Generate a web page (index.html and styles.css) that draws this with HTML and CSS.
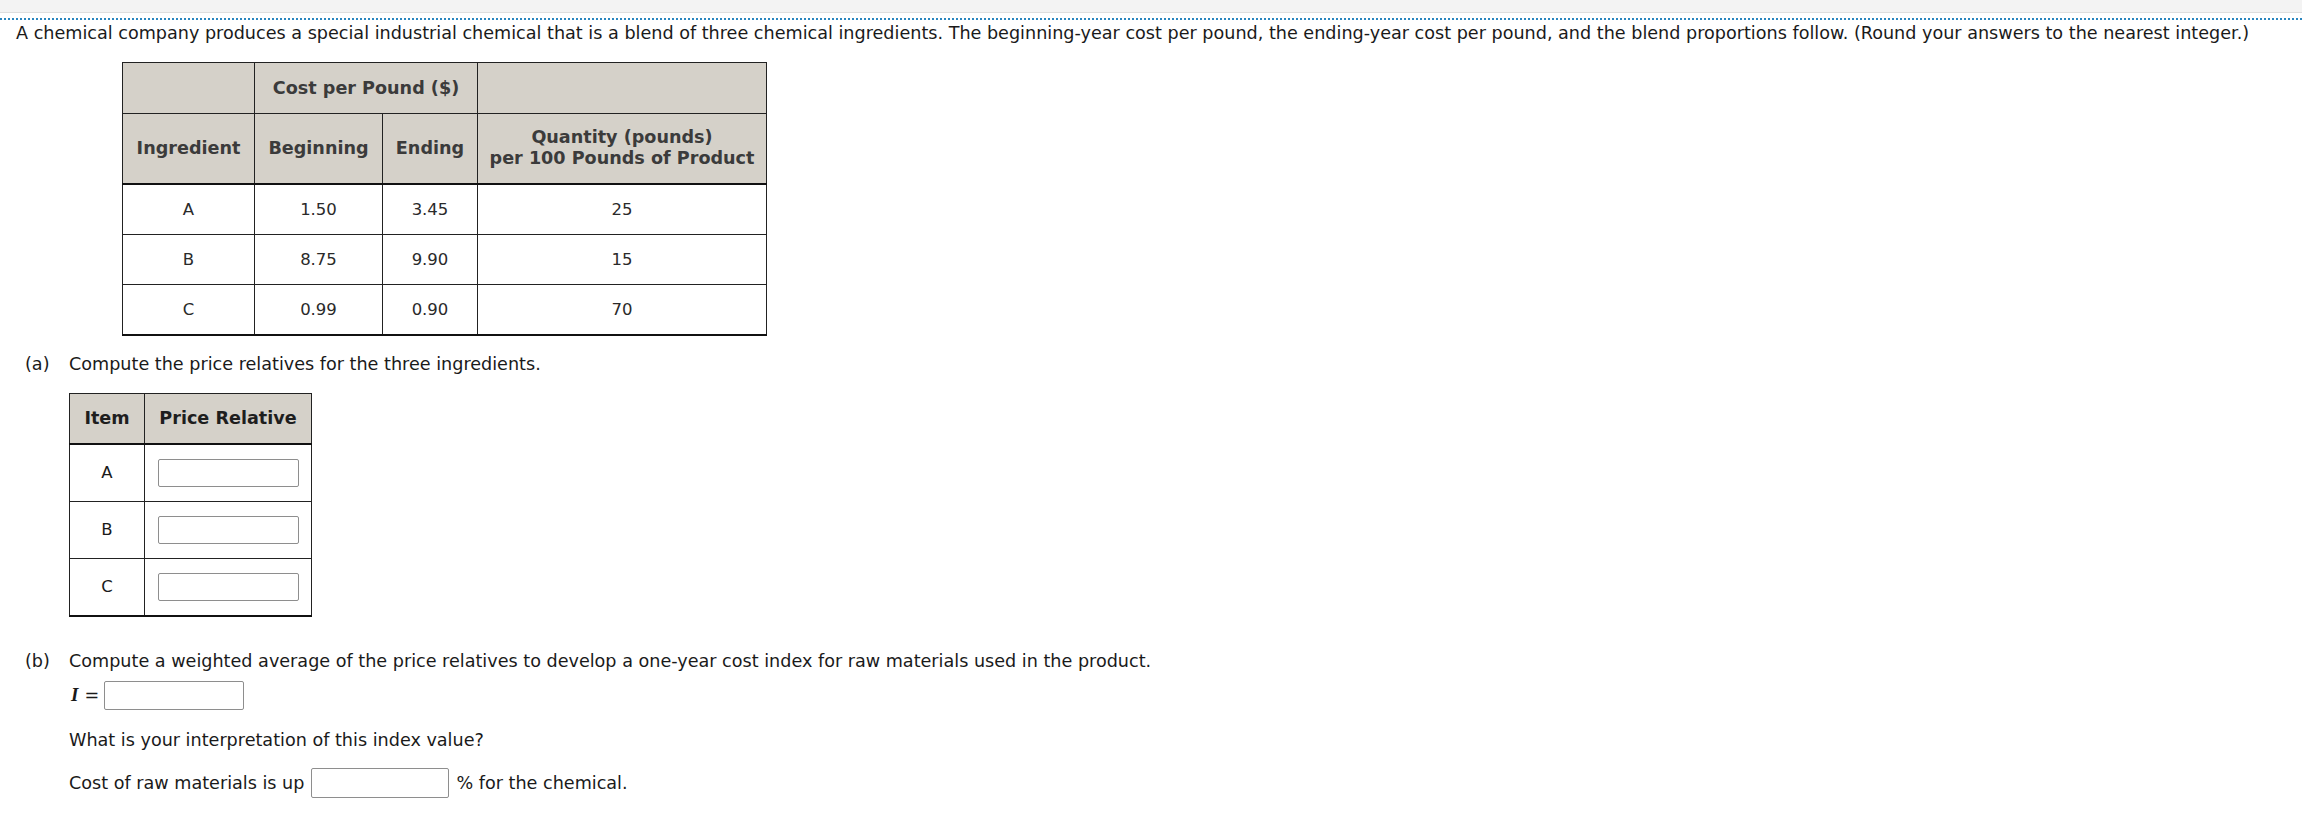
FILE: index.html
```html
<!DOCTYPE html>
<html>
<head>
<meta charset="utf-8">
<title>Price index</title>
<link rel="stylesheet" href="styles.css">
</head>
<body>
<div class="topbar"></div>
<div class="question">
  <p class="intro">A chemical company produces a special industrial chemical that is a blend of three chemical ingredients. The beginning-year cost per pound, the ending-year cost per pound, and the blend proportions follow. (Round your answers to the nearest integer.)</p>

  <table class="data">
    <colgroup>
      <col class="c1"><col class="c2"><col class="c3"><col class="c4">
    </colgroup>
    <thead>
      <tr class="h1">
        <th></th>
        <th colspan="2">Cost per Pound ($)</th>
        <th></th>
      </tr>
      <tr class="h2">
        <th>Ingredient</th>
        <th>Beginning</th>
        <th>Ending</th>
        <th>Quantity (pounds)<br>per 100 Pounds of Product</th>
      </tr>
    </thead>
    <tbody>
      <tr><td>A</td><td>1.50</td><td>3.45</td><td>25</td></tr>
      <tr><td>B</td><td>8.75</td><td>9.90</td><td>15</td></tr>
      <tr><td>C</td><td>0.99</td><td>0.90</td><td>70</td></tr>
    </tbody>
  </table>

  <div class="part part-a">
    <div class="part-head"><span class="label">(a)</span><span>Compute the price relatives for the three ingredients.</span></div>
    <div class="part-body">
      <table class="answers">
        <colgroup><col class="a1"><col class="a2"></colgroup>
        <thead>
          <tr><th>Item</th><th>Price Relative</th></tr>
        </thead>
        <tbody>
          <tr><td>A</td><td><input type="text" class="box"></td></tr>
          <tr><td>B</td><td><input type="text" class="box"></td></tr>
          <tr><td>C</td><td><input type="text" class="box"></td></tr>
        </tbody>
      </table>
    </div>
  </div>

  <div class="part part-b">
    <div class="part-head"><span class="label">(b)</span><span>Compute a weighted average of the price relatives to develop a one-year cost index for raw materials used in the product.</span></div>
    <div class="part-body">
      <div class="index-row"><span class="var">I</span><span class="eq">=</span><input type="text" class="box"></div>
      <p class="interp">What is your interpretation of this index value?</p>
      <div class="cost-row"><span>Cost of raw materials is up</span><input type="text" class="box"><span class="after">% for the chemical.</span></div>
    </div>
  </div>
</div>
</body>
</html>
```

FILE: styles.css
```css
body {
  margin: 0;
  background: #ffffff;
  font-family: "DejaVu Sans", Verdana, sans-serif;
  font-size: 17.6px;
  color: #1a1a1a;
}

.topbar {
  height: 12px;
  background: #f3f3f3;
  border-bottom: 1px solid #dedede;
}

.question {
  margin-top: 5px;
  border-top: 2px dotted #2a86bf;
  padding: 0 16px 30px 16px;
}

.intro {
  margin: 0;
  padding-top: 2px;
  line-height: 22px;
  white-space: nowrap;
}

.data {
  margin: 18px 0 0 106px;
  border-collapse: collapse;
  border-bottom: 2px solid #111;
}

.data .c1 { width: 132px; }
.data .c2 { width: 128px; }
.data .c3 { width: 95px; }
.data .c4 { width: 289px; }

.data th,
.data td {
  border: 1px solid #222;
  padding: 0 6px;
  text-align: center;
}

.data th {
  background: #d5d1c9;
  color: #3b3b3b;
  font-weight: bold;
  line-height: 21px;
}

.data .h1 { height: 51px; }
.data .h2 { height: 70px; }
.data .h2 th { border-bottom: 2px solid #111; }

.data td {
  height: 49px;
  font-size: 16.5px;
  color: #2a2a2a;
}

.part-head {
  display: flex;
  line-height: 22px;
  padding-left: 9px;
}

.part-head .label {
  width: 44px;
  flex: none;
}

.part-body {
  padding-left: 53px;
}

.part-a .part-head { margin-top: 17px; }

.answers {
  margin-top: 18px;
  border-collapse: collapse;
  border-bottom: 2px solid #111;
}

.answers .a1 { width: 75px; }
.answers .a2 { width: 167px; }

.answers th,
.answers td {
  border: 1px solid #222;
  text-align: center;
  padding: 0;
}

.answers th {
  height: 49px;
  background: #d5d1c9;
  color: #1e1e1e;
  font-weight: bold;
  border-bottom: 2px solid #111;
}

.answers td {
  height: 56px;
  font-size: 16.5px;
}

.box {
  box-sizing: border-box;
  width: 140px;
  height: 29px;
  border: 1px solid #8e8e8e;
  border-radius: 2px;
  background: #fff;
  margin: 0;
  padding: 0 4px;
  font: inherit;
  vertical-align: middle;
}

.answers .box {
  width: 141px;
  height: 28px;
}

.part-b .part-head { margin-top: 33px; }

.index-row {
  display: flex;
  align-items: center;
  margin-top: 9px;
  height: 29px;
}

.index-row .var {
  font-family: "Liberation Serif", "Times New Roman", serif;
  font-style: italic;
  font-weight: bold;
  font-size: 19px;
  margin-left: 2px;
}

.index-row .eq {
  margin: 0 5px 0 6px;
}

.interp {
  margin: 19px 0 0 0;
  line-height: 22px;
}

.cost-row {
  display: flex;
  align-items: center;
  gap: 5px;
  margin-top: 17px;
  height: 30px;
}

.cost-row .box {
  height: 30px;
  width: 138px;
  margin-left: 2px;
}

.cost-row .after {
  margin-left: 2px;
}
```
